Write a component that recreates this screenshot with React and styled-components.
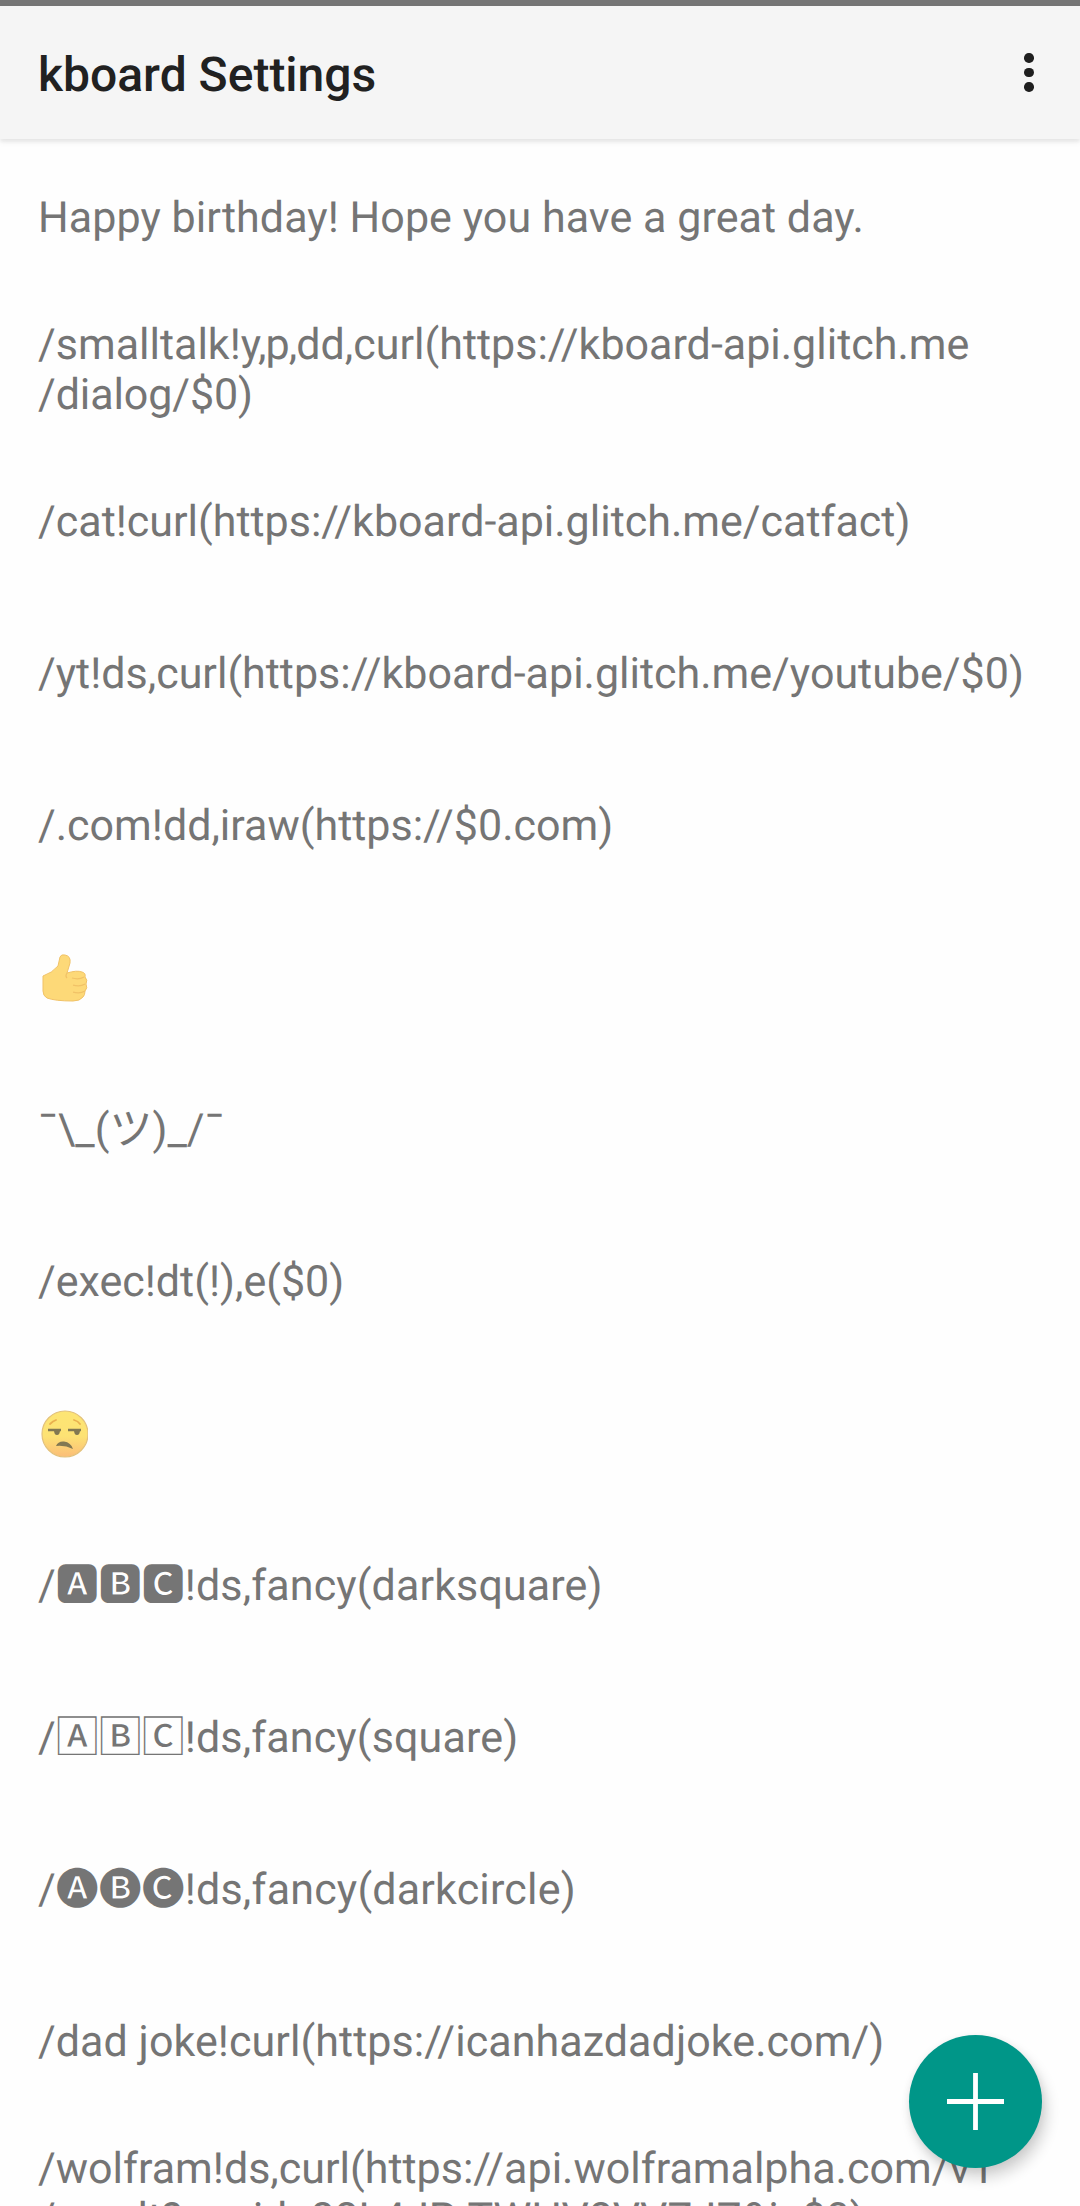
import React from "react";
import styled, { createGlobalStyle } from "styled-components";

const GlobalStyle = createGlobalStyle`
  * { box-sizing: border-box; }
  html, body { margin: 0; padding: 0; background: #fefefe; overflow: hidden; }
`;

const Screen = styled.div`
  width: 1080px;
  height: 2206px;
  display: flex;
  flex-direction: column;
  overflow: hidden;
  position: relative;
  background: #fefefe;
  color: #757575;
  font-family: Roboto, "Noto Sans CJK JP", sans-serif;
  text-rendering: geometricPrecision;
`;

const StatusStrip = styled.div`
  flex: none;
  height: 6px;
  background: #757575;
`;

const Toolbar = styled.header`
  flex: none;
  height: 133px;
  padding: 0 41px 0 38px;
  display: flex;
  align-items: center;
  justify-content: space-between;
  background: #f5f5f5;
  box-shadow: 0 3px 7px rgba(0, 0, 0, 0.06), 0 3px 3px rgba(0, 0, 0, 0.05);
  z-index: 1;
`;

const Title = styled.h1`
  margin: 0;
  padding-top: 5px;
  color: #212121;
  font-size: 48px;
  line-height: 56px;
  font-weight: 500;
`;

const MenuButton = styled.button`
  padding: 0;
  border: 0;
  background: none;
  display: flex;
  flex-direction: column;
  gap: 5px;
  width: 20px;
  align-items: center;
`;

const Dot = styled.span`
  width: 9.5px;
  height: 9.5px;
  border-radius: 50%;
  background: #1f1f1f;
`;

const List = styled.ul`
  margin: 0;
  padding: 15px 38px 0;
  list-style: none;
`;

const Item = styled.li`
  height: ${(p) => p.$height}px;
  padding-top: ${(p) => p.$top}px;
  display: flex;
  align-items: center;
  font-size: 43px;
  line-height: 50px;
  white-space: pre;
`;

const Run = styled.span`
  letter-spacing: ${(p) => p.$tracking || 0}px;
`;

const Glyphs = styled.span`
  font-family: "Noto Sans CJK JP", sans-serif;
  line-height: 1;
`;

const Emoji = styled.svg`
  width: 50px;
  height: 50px;
  display: block;
`;

const Fab = styled.button`
  position: absolute;
  left: 909px;
  top: 2035px;
  width: 133px;
  height: 133px;
  padding: 0;
  border: 0;
  border-radius: 50%;
  background: #009688;
  display: flex;
  align-items: center;
  justify-content: center;
  box-shadow: 5px 10px 14px rgba(0, 0, 0, 0.16), 0 2px 8px rgba(0, 0, 0, 0.08);
`;

const PlusIcon = () => (
  <svg width="57" height="57" viewBox="0 0 57 57">
    <path d="M28.5 0v57M0 28.5h57" stroke="#fff" strokeWidth="4.8" />
  </svg>
);

const ThumbsUp = () => (
  <Emoji viewBox="0 0 50 50" aria-label="thumbs up">
    <path
      d="M5 23 Q14 20 20 13 L22 4 Q23 1 27 2 Q33 3 32 10 L29 20 Q39 17 44 19 Q48 20 47 24 Q50 27 48 31 Q50 35 47 38 Q47 42 45 44 Q42 48 35 48 Q17 48 9 45 Q5 43 5 38 Z"
      fill="#fdd978"
      stroke="#f1c267"
      strokeWidth="1"
    />
    <path d="M29 20q-2 3 0 5M46 24q-5 3-12 1M47 31q-5 3-12 1M47 38q-5 3-12 1" fill="none" stroke="#f1c267" strokeWidth="1.3" />
  </Emoji>
);

const Unamused = () => (
  <Emoji viewBox="0 0 50 50" aria-label="unamused face">
    <defs>
      <linearGradient id="face" x1="0" y1="0" x2="0" y2="1">
        <stop offset="0" stopColor="#fde574" />
        <stop offset="0.55" stopColor="#fde274" />
        <stop offset="1" stopColor="#fbbd78" />
      </linearGradient>
    </defs>
    <circle cx="27" cy="25" r="23" fill="url(#face)" stroke="#e3c27c" strokeWidth="1.2" />
    <path d="M12 15q3-3 6-4M36 11q4 1 6 4" fill="none" stroke="#e9b04f" strokeWidth="1.8" strokeLinecap="round" />
    <path d="M10 21h13M30 21h13" stroke="#827852" strokeWidth="2.6" />
    <path d="M16 21h6q0 5-3 5t-3-5M36 21h6q0 5-3 5t-3-5" fill="#827852" />
    <path d="M18 37q2-5 8-4.500q7 1 9 7.500q-8-4-17-3" fill="#827852" />
  </Emoji>
);

const ITEMS = [
  { height: 127, runs: [["Happy birthday! Hope you have a great day.", 0.065]] },
  {
    height: 165,
    top: 13,
    runs: [
      ["/smalltalk!"],
      ["y,p,", -0.9],
      ["dd,curl(https://kboard-api.glitch.me\n"],
      ["/dialog/$0)", -0.1],
    ],
  },
  { runs: [["/cat!curl(https://kboard-api.glitch.me/catfact)"]] },
  { runs: [["/yt!ds,curl(https://kboard-api.glitch.me/youtube/$0)"]] },
  { runs: [["/.com!dd,iraw(https://$0.com)"]] },
  { icon: <ThumbsUp /> },
  { runs: [["¯\\_(ツ)_/¯"]] },
  { runs: [["/exec!dt(!),e($0)"]] },
  { icon: <Unamused /> },
  { glyphs: "🅰︎🅱︎🅲", runs: [["!ds,fancy(darksquare)", 0.12]] },
  { glyphs: "🄰🄱🄲", runs: [["!ds,fancy(square)", 0.13]] },
  { glyphs: "🅐🅑🅒", runs: [["!ds,fancy(darkcircle)", 0.19]] },
  { runs: [["/dad joke!curl(https://icanhazdadjoke.com/)", 0.065]] },
  {
    runs: [
      ["/wolfram!ds,curl(https://api.wolframalpha.com/v1\n"],
      ["/result?appid=88L4JP-TWHV8VVZJZ&i=$0)", -0.21],
    ],
  },
];

export default function App() {
  return (
    <Screen>
      <GlobalStyle />
      <StatusStrip />
      <Toolbar>
        <Title>kboard Settings</Title>
        <MenuButton aria-label="More options">
          <Dot />
          <Dot />
          <Dot />
        </MenuButton>
      </Toolbar>
      <List>
        {ITEMS.map((item, i) => (
          <Item key={i} $height={item.height || 152} $top={item.top || 0}>
            {item.icon || (
              <span>
                {item.glyphs && (
                  <>
                    /<Glyphs>{item.glyphs}</Glyphs>
                  </>
                )}
                {item.runs.map(([text, tracking], j) => (
                  <Run key={j} $tracking={tracking}>
                    {text}
                  </Run>
                ))}
              </span>
            )}
          </Item>
        ))}
      </List>
      <Fab aria-label="Add">
        <PlusIcon />
      </Fab>
    </Screen>
  );
}
